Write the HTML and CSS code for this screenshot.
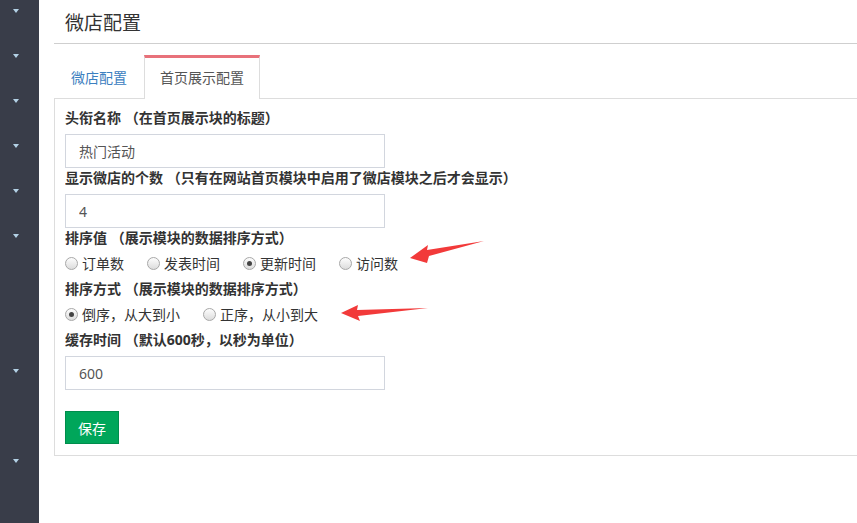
FILE: index.html
```html
<!DOCTYPE html>
<html lang="zh-CN">

<head>
    <meta charset="UTF-8">
    <title>微店配置</title>
    <link rel="stylesheet" href="styles.css">
</head>

<body>

    <div class="sidebar">
        <span class="caret" style="top: 9px"></span>
        <span class="caret" style="top: 54px"></span>
        <span class="caret" style="top: 99px"></span>
        <span class="caret" style="top: 144px"></span>
        <span class="caret" style="top: 189px"></span>
        <span class="caret" style="top: 234px"></span>
        <span class="caret" style="top: 369px"></span>
        <span class="caret" style="top: 459px"></span>
    </div>

    <div class="main">
        <h2 class="page-title">微店配置</h2>

        <ul class="tabs">
            <li class="tab">微店配置</li>
            <li class="tab active">首页展示配置</li>
        </ul>

        <div class="panel">
            <label class="field-label">头衔名称 （在首页展示块的标题）</label>
            <input class="text-input" type="text" value="热门活动">

            <label class="field-label">显示微店的个数 （只有在网站首页模块中启用了微店模块之后才会显示）</label>
            <input class="text-input" type="text" value="4">

            <label class="field-label">排序值 （展示模块的数据排序方式）</label>
            <div class="radio-row">
                <label class="radio"><input type="radio" name="sort"><span>订单数</span></label>
                <label class="radio"><input type="radio" name="sort"><span>发表时间</span></label>
                <label class="radio"><input type="radio" name="sort" checked><span>更新时间</span></label>
                <label class="radio"><input type="radio" name="sort"><span>访问数</span></label>
            </div>

            <label class="field-label">排序方式 （展示模块的数据排序方式）</label>
            <div class="radio-row">
                <label class="radio"><input type="radio" name="order" checked><span>倒序，从大到小</span></label>
                <label class="radio"><input type="radio" name="order"><span>正序，从小到大</span></label>
            </div>

            <label class="field-label">缓存时间 （默认600秒，以秒为单位）</label>
            <input class="text-input" type="text" value="600">

            <button class="btn-save" type="button">保存</button>
        </div>
    </div>

    <svg class="arrows" width="857" height="523" viewBox="0 0 857 523">
        <polygon points="410,258 428,245 427,250 484,241 429,256 427,263" fill="#f23a3a" />
        <polygon points="341,313 358,305 357,310 428,308 358,316 360,321" fill="#f23a3a" />
    </svg>

</body>

</html>
```

FILE: styles.css
```css
body {
    margin: 0;
    padding: 0;
    font-family: "Noto Sans", "Noto Sans CJK SC", sans-serif;
    font-size: 14px;
    color: #333;
    background-color: #fff;
    display: flex;
    height: 523px;
    overflow: hidden;
}

.sidebar {
    width: 39px;
    flex-shrink: 0;
    background-color: #393d49;
    position: relative;
}

.caret {
    position: absolute;
    left: 13px;
    width: 0;
    height: 0;
    border-left: 3.5px solid transparent;
    border-right: 3.5px solid transparent;
    border-top: 4px solid #b4d2e6;
}

.main {
    flex: 1;
    padding-left: 15px;
}

.page-title {
    margin: 0;
    height: 44px;
    line-height: 46px;
    padding-left: 11px;
    font-size: 19px;
    font-weight: normal;
    color: #333;
    border-bottom: 1px solid #cfcfcf;
    box-sizing: border-box;
    overflow: hidden;
}

.tabs {
    list-style: none;
    margin: 11px 0 0;
    padding: 0;
    display: flex;
    border-bottom: 1px solid #ddd;
}

.tab {
    height: 43px;
    line-height: 40px;
    padding: 0 16px;
    border: 1px solid transparent;
    border-top: 3px solid transparent;
    border-bottom: none;
    margin-bottom: -1px;
    color: #3c80c0;
    box-sizing: border-box;
}

.tab.active {
    color: #555;
    background-color: #fff;
    border-color: #ddd;
    border-top-color: #e8717a;
    height: 44px;
    padding: 0 15px;
}

.panel {
    border-left: 1px solid #ddd;
    border-bottom: 1px solid #ddd;
    padding: 9px 10px 11px 10px;
    display: flex;
    flex-direction: column;
    align-items: flex-start;
}

.field-label {
    display: block;
    font-weight: bold;
    height: 20px;
    line-height: 20px;
    color: #333;
    margin-bottom: 6px;
    overflow: hidden;
}

.text-input {
    width: 320px;
    height: 34px;
    box-sizing: border-box;
    border: 1px solid #d2d6de;
    padding: 0 13px;
    font-family: inherit;
    font-size: 14px;
    color: #555;
    margin: 0;
    outline: none;
}

.radio-row {
    display: flex;
    gap: 23px;
    height: 31px;
    align-items: center;
    margin-top: -6px;
}

.radio {
    display: flex;
    align-items: center;
    height: 20px;
    color: #333;
    line-height: 20px;
}

.radio input {
    appearance: none;
    -webkit-appearance: none;
    width: 13px;
    height: 13px;
    margin: 0 4px 0 0;
    border: 1px solid #a8a8a8;
    border-radius: 50%;
    background: linear-gradient(#fdfdfd, #dcdcdc);
    box-sizing: border-box;
    position: relative;
}

.radio input:checked::after {
    content: "";
    position: absolute;
    left: 3px;
    top: 3px;
    width: 5px;
    height: 5px;
    border-radius: 50%;
    background-color: #444;
}

.btn-save {
    margin-top: 21px;
    width: 54px;
    height: 33px;
    background-color: #00a65a;
    border: 1px solid #008d4c;
    color: #fff;
    font-family: inherit;
    font-size: 14px;
    padding: 0;
}

.arrows {
    position: absolute;
    left: 0;
    top: 0;
    pointer-events: none;
}
```
